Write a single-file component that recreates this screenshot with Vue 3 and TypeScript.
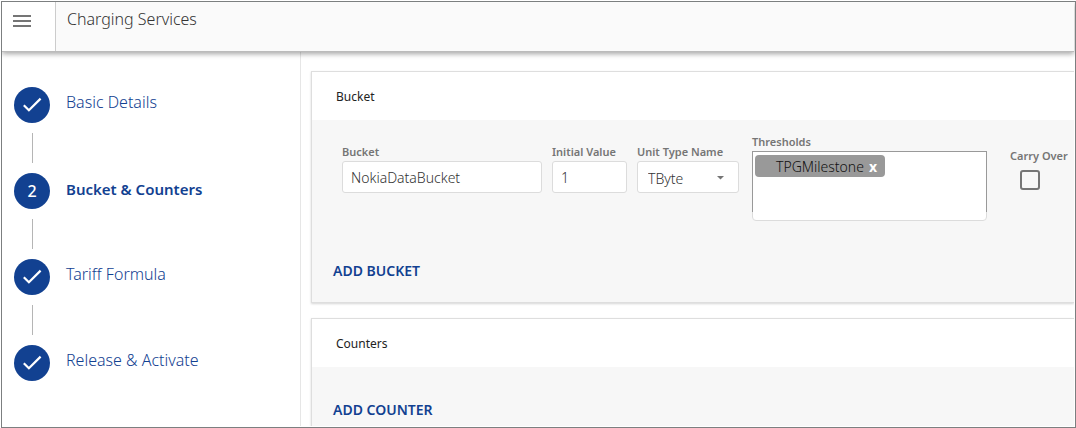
<script setup lang="ts">
import { ref } from 'vue'

interface Step {
  id: number
  label: string
  done: boolean
}

const steps: Step[] = [
  { id: 1, label: 'Basic Details', done: true },
  { id: 2, label: 'Bucket & Counters', done: false },
  { id: 3, label: 'Tariff Formula', done: true },
  { id: 4, label: 'Release & Activate', done: true },
]

const bucketName = ref('NokiaDataBucket')
const initialValue = ref('1')
const unitType = ref('TByte')
const unitTypes = ['Byte', 'KByte', 'MByte', 'GByte', 'TByte']
const thresholds = ref<string[]>(['TPGMilestone'])
const carryOver = ref(false)

function removeThreshold(name: string) {
  thresholds.value = thresholds.value.filter((t) => t !== name)
}
</script>

<template>
  <div class="window">
    <div class="app">
      <header class="topbar">
        <button class="menu" type="button" aria-label="Menu">
          <svg width="18" height="12" viewBox="0 0 18 12" aria-hidden="true">
            <path d="M0 0h18v2H0zM0 5h18v2H0zM0 10h18v2H0z" fill="#757575" />
          </svg>
        </button>
        <h1 class="title">Charging Services</h1>
      </header>

      <div class="body">
        <nav class="sidebar" aria-label="Steps">
          <ol class="steps">
            <li v-for="step in steps" :key="step.id" class="step">
              <a href="#" class="step-link" :class="{ current: !step.done }">
                <span class="dot">
                  <svg v-if="step.done" width="36" height="36" viewBox="0 0 36 36" aria-hidden="true">
                    <path d="M9.8 18.2l5.1 5.1L26.6 11.6" fill="none" stroke="#fff" stroke-width="2.2" />
                  </svg>
                  <template v-else>{{ step.id }}</template>
                </span>
                <span class="step-label">{{ step.label }}</span>
              </a>
            </li>
          </ol>
        </nav>

        <main class="content">
          <section class="card">
            <h2 class="card-title">Bucket</h2>
            <div class="card-body">
              <div class="fields">
                <div class="field name">
                  <label for="bucket">Bucket</label>
                  <input id="bucket" v-model="bucketName" class="box" type="text" />
                </div>
                <div class="field initial">
                  <label for="initial">Initial Value</label>
                  <input id="initial" v-model="initialValue" class="box" type="text" />
                </div>
                <div class="field unit">
                  <label for="unit">Unit Type Name</label>
                  <div class="select-wrap">
                    <select id="unit" v-model="unitType" class="box">
                      <option v-for="u in unitTypes" :key="u">{{ u }}</option>
                    </select>
                    <svg class="arrow" width="7" height="4" viewBox="0 0 7 4" aria-hidden="true">
                      <path d="M0 0h7L3.5 3.5z" fill="#757575" />
                    </svg>
                  </div>
                </div>
                <div class="field thresholds">
                  <span id="thresholds-label" class="label">Thresholds</span>
                  <div class="tag-box">
                    <ul class="tags" aria-labelledby="thresholds-label">
                      <li v-for="t in thresholds" :key="t" class="tag">
                        <span>{{ t }}</span>
                        <button type="button" :aria-label="'Remove ' + t" @click="removeThreshold(t)">x</button>
                      </li>
                    </ul>
                  </div>
                </div>
                <div class="field carry">
                  <label for="carry">Carry Over</label>
                  <input id="carry" v-model="carryOver" type="checkbox" />
                </div>
              </div>
              <button class="add" type="button">ADD BUCKET</button>
            </div>
          </section>

          <section class="card last">
            <h2 class="card-title">Counters</h2>
            <div class="card-body">
              <button class="add" type="button">ADD COUNTER</button>
            </div>
          </section>
        </main>
      </div>
    </div>
  </div>
</template>

<style>
body {
  margin: 0;
  background: #fff;
}
</style>

<style scoped>
* {
  box-sizing: border-box;
}

.window {
  height: 100vh;
  padding: 1px 0 0 1px;
  font-family: "Noto Sans", "Open Sans", sans-serif;
  color: #333;
}

.app {
  display: flex;
  flex-direction: column;
  height: 100%;
  padding: 0 1px 1px 0;
  border: 1px solid #7c7f80;
  overflow: hidden;
}

.topbar {
  display: flex;
  flex: none;
  height: 50px;
  border-bottom: 1px solid #bbb;
  background: #fafafa;
  box-shadow: 0 2px 5px rgba(0, 0, 0, 0.35);
  z-index: 1;
}

.menu {
  display: flex;
  width: 54px;
  padding: 13px 11px;
  border: 0;
  border-right: 1px solid #ccc;
  background: #fff;
}

.title {
  margin: 0;
  padding-left: 11px;
  font-size: 16px;
  font-weight: 300;
  line-height: 34px;
}

.body {
  display: flex;
  flex: 1;
  min-height: 0;
}

.sidebar {
  flex: none;
  width: 299px;
  padding: 35px 12px;
  border-right: 1px solid #e6e6e6;
}

.steps {
  display: grid;
  gap: 50px;
  margin: 0;
  padding: 0;
  list-style: none;
}

.step {
  position: relative;
}

.step:not(:last-child)::after {
  content: "";
  position: absolute;
  top: 46px;
  left: 18px;
  width: 1px;
  height: 30px;
  background: #b5b5b5;
}

.step-link {
  display: flex;
  gap: 16px;
  color: #124191;
  font-size: 16px;
  font-weight: 300;
  line-height: 30px;
  text-decoration: none;
}

.dot {
  display: flex;
  align-items: center;
  justify-content: center;
  width: 36px;
  height: 36px;
  border-radius: 50%;
  background: #124191;
  color: #fff;
  font-size: 16px;
  font-weight: 500;
}

.current .step-label {
  font-size: 15px;
  font-weight: 600;
  line-height: 32px;
}

.content {
  display: flex;
  flex: 1;
  flex-direction: column;
  gap: 15px;
  min-width: 0;
  padding: 19px 0 0 10px;
  overflow: hidden;
}

.card {
  flex: none;
  border: 1px solid #dedede;
  border-right: 0;
  background: #f7f7f7;
  box-shadow: 0 1px 2px rgba(0, 0, 0, 0.16);
}

.last {
  flex: 1 0 auto;
  border-bottom: 0;
}

.card-title {
  margin: 0;
  padding: 2px 24px 0;
  background: #fff;
  color: #222;
  font-size: 12px;
  font-weight: 400;
  line-height: 46px;
}

.card-body {
  padding: 14px 0 19px 21px;
}

.fields {
  display: flex;
  gap: 10px;
  margin: 0 0 38px 9px;
}

.field {
  flex: none;
  margin-top: 10px;
}

.field label,
.label {
  display: block;
  padding-bottom: 2px;
  color: #757575;
  font-size: 11px;
  font-weight: 600;
  line-height: 15px;
  white-space: nowrap;
}

.name {
  width: 200px;
}

.initial {
  width: 75px;
}

.unit {
  width: 102px;
}

.thresholds {
  width: 235px;
  margin: 0 13px 0 3px;
}

.carry {
  margin-top: 14px;
}

.box {
  display: block;
  width: 100%;
  height: 32px;
  padding: 0 8px;
  border: 1px solid #dcdcdc;
  border-radius: 3px;
  background: #fff;
  color: #333;
  font: 300 14px "Noto Sans", "Open Sans", sans-serif;
}

.select-wrap {
  position: relative;
}

select.box {
  padding: 3px 10px 0;
  appearance: none;
}

.arrow {
  position: absolute;
  top: 15px;
  right: 15px;
  pointer-events: none;
}

.tag-box {
  min-height: 70px;
  border: 1px solid #dcdcdc;
  border-radius: 0 0 4px 4px;
  background: #fff;
}

.tags {
  display: flex;
  flex-wrap: wrap;
  align-content: flex-start;
  min-height: 61px;
  margin: -1px -1px 0;
  padding: 3px 2px;
  border: 1px solid #999;
  border-bottom: 0;
  list-style: none;
}

.tag {
  display: flex;
  gap: 5px;
  height: 22px;
  padding: 0 8px 0 21px;
  border-radius: 4px;
  background: #999;
  color: #111;
  font-size: 14px;
  font-weight: 300;
  line-height: 24px;
}

.tag button {
  padding: 0;
  border: 0;
  background: none;
  color: #fff;
  font: inherit;
  font-weight: 700;
}

.carry input {
  display: block;
  width: 20px;
  height: 20px;
  margin: 5px 10px;
  border: 2px solid #757575;
  border-radius: 3px;
  background: transparent;
  appearance: none;
}

.carry input:checked {
  background: #124191;
}

.add {
  display: block;
  padding: 0;
  border: 0;
  background: none;
  color: #124191;
  font: 600 14px/24px "Noto Sans", "Open Sans", sans-serif;
}

.last .card-body {
  padding-top: 31px;
}
</style>
